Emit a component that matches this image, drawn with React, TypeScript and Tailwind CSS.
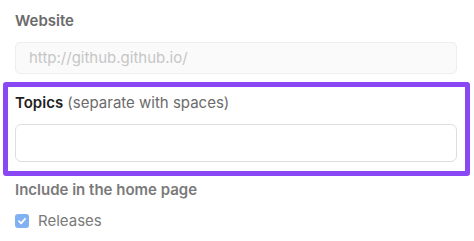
export default function App() {
  return (
    <div className="w-[474px] h-[241px] bg-white overflow-hidden font-['Inter','Liberation_Sans',sans-serif]">
      <div className="px-[15px] pt-[11px]">
        <div className="text-[15px] leading-[20px] font-semibold text-[#6b6b6b]">Website</div>
        <div className="mt-[11px] h-[32px] w-[442px] rounded-[5px] border border-[#eeeeee] bg-[#fafafa] flex items-center pl-[13px] text-[15px] text-[#c6c6c6]">
          http://github.github.io/
        </div>
      </div>

      <div className="ml-[3px] mt-[8px] w-[467px] border-[5px] border-[#8a47f4] rounded-[3px] pl-[7px] pr-[8px] pt-[6px] pb-[9px]">
        <div className="text-[15px] leading-[20px] text-[#1f1f1f]">
          <span className="font-semibold">Topics</span>{' '}
          <span className="text-[#6b6b6b]">(separate with spaces)</span>
        </div>
        <div className="mt-[11px] h-[38px] rounded-[6px] border border-[#dedede] bg-white" />
      </div>

      <div className="px-[15px] pt-[4px]">
        <div className="text-[15px] leading-[20px] font-semibold text-[#7a7a7a]">Include in the home page</div>
        <label className="mt-[11px] flex items-center gap-[9px]">
          <span className="w-[14px] h-[14px] rounded-[3px] bg-[#80b1f2] flex items-center justify-center">
            <svg width="10" height="10" viewBox="0 0 10 10" fill="none">
              <path d="M2 5.2L4.1 7.3L8 2.8" stroke="white" strokeWidth="1.8" strokeLinecap="round" strokeLinejoin="round" />
            </svg>
          </span>
          <span className="text-[15px] leading-[20px] text-[#7a7a7a]">Releases</span>
        </label>
      </div>
    </div>
  )
}
